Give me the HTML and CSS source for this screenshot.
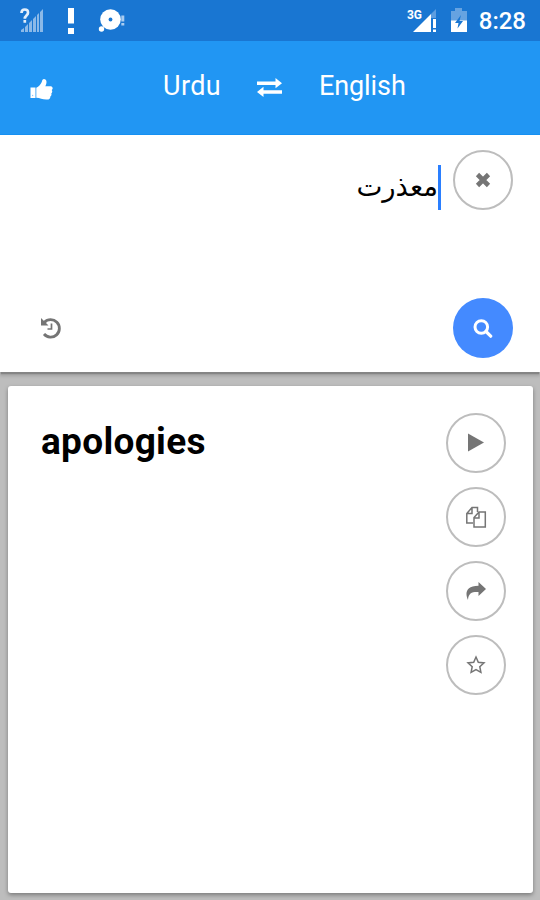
FILE: index.html
```html
<!DOCTYPE html>
<html lang="en">
<head>
    <meta charset="UTF-8">
    <title>Urdu English Translator</title>
    <link rel="stylesheet" href="styles.css">
</head>
<body>
    <div class="status">
        <svg class="st-signal" width="24" height="26" viewBox="0 0 24 26">
            <path d="M1.500 5q0-3.500 3.300-3.500T8 4.700c0 2.800-3.200 2.800-3.200 6M4.800 12v2.800" fill="none" stroke="#e3effb" stroke-width="2.700"/>
            <path d="M1 24v-2l3-2v4zM5 24v-5l3-3v8zM9 24v-9l3-3v12zM13 24V11l3-3v16zM17 24V7l2-2v19zM20 24V4l3-3v23z" fill="#8bb9e8"/>
        </svg>
        <svg class="st-alert" width="8" height="28" viewBox="0 0 8 28">
            <path d="M1 1h6v15.500H1zM1 21h6v6H1z" fill="#fff"/>
        </svg>
        <svg class="st-disc" width="28" height="25" viewBox="0 0 28 25">
            <circle cx="12.500" cy="11.500" r="10.300" fill="#fff"/>
            <circle cx="12.500" cy="11.500" r="1.900" fill="#1976d2"/>
            <circle cx="3.500" cy="21" r="2.700" fill="#fff"/>
            <path d="M23.300 7.500h3v6h-3zM23.300 15h3v2.500h-3z" fill="#a9ccf0"/>
        </svg>
        <div class="st-right">
            <svg class="st-3g" width="31" height="26" viewBox="0 0 31 26">
                <path d="M24 6l5-5v9h-5z" fill="#5e9ee0"/>
                <path d="M6 24L24 6v18zM26 11h3v9h-3zM26 21.500h3V24h-3z" fill="#fff"/>
                <text x="0" y="11" textLength="15" lengthAdjust="spacingAndGlyphs">3G</text>
            </svg>
            <svg class="st-battery" width="18" height="26" viewBox="0 0 18 26">
                <path d="M1 3h4V0h7v3h5v11H1z" fill="#66a3e1"/>
                <path d="M1 12.500h16V24H1z" fill="#fff"/>
                <path d="M11 7L5 15h3.500L7.500 20.500 13 13H9.500z" fill="#1976d2"/>
            </svg>
            <span class="clock">8:28</span>
        </div>
    </div>

    <div class="header">
        <svg class="thumb" width="24" height="24" viewBox="0 0 24 24">
            <path d="M.5 9.500h5V20h-5zM6.300 9.800c2.500-1 4.200-3.300 5.200-5.200.8-1.600.4-3.500 2.400-3.600 3.200.1 3.200 4 1.400 7.300h4.900c2.800 0 3.100 2.800 1.500 3.800 1 1.100.6 2.700-.4 3.300.5 1.300 0 2.500-1 3 .2 2-1 3.100-3.400 3.100-4.300.2-6.800-1.700-10.600-1.800z" fill="#fff"/>
            <circle cx="2.600" cy="17.500" r=".7" fill="#90caf9"/>
        </svg>
        <span class="lang from">Urdu</span>
        <svg class="swap" width="25" height="19" viewBox="0 0 25 19">
            <path d="M0 3.500h18.500V0L25 5.300l-6.500 5V7H0zM25 15.800H6.500V19L0 14l6.500-5.300v3.600H25z" fill="#fff"/>
        </svg>
        <span class="lang to">English</span>
    </div>

    <div class="source">
        <div class="source-top">
            <div class="source-text"><span class="word" lang="ur" dir="rtl">معذرت</span><i class="caret"></i></div>
            <button class="round">
                <svg width="16" height="16" viewBox="0 0 16 16"><path d="M2.500 2.500l11 11M13.500 2.500l-11 11" stroke="#757575" stroke-width="4.600"/></svg>
            </button>
        </div>
        <div class="source-bottom">
            <svg width="22" height="22" viewBox="0 0 22 22">
                <path d="M4.300 5.500A8.700 8.700 0 1 1 4 17" fill="none" stroke="#757575" stroke-width="2.800"/>
                <path d="M1 1v7.500h7.500z" fill="#757575"/>
                <path d="M11.500 6.500V12H7.500" fill="none" stroke="#757575" stroke-width="1.700"/>
            </svg>
            <button class="round search">
                <svg width="20" height="20" viewBox="0 0 20 20"><circle cx="8.300" cy="9" r="6.300" fill="none" stroke="#fff" stroke-width="3"/><path d="M13 13.500l4.700 4.700" stroke="#fff" stroke-width="3.200" stroke-linecap="round"/></svg>
            </button>
        </div>
    </div>

    <div class="result">
        <div class="card">
            <h1>apologies</h1>
            <div class="actions">
                <button class="round">
                    <svg width="20" height="20" viewBox="0 0 20 20"><path d="M2 .5l16 9-16 9z" fill="#757575"/></svg>
                </button>
                <button class="round">
                    <svg width="22" height="22" viewBox="0 0 22 22" fill="none" stroke="#757575" stroke-width="1.500">
                        <path d="M8 17H1.800V7.500L7 1.500h5.500V6M7 1.500v6H2"/>
                        <path d="M9 21v-9.500L14 6h6.300v15zM14 6v6H9"/>
                    </svg>
                </button>
                <button class="round">
                    <svg width="22" height="20" viewBox="0 0 22 20"><path d="M21 8l-7.500 7v-3.900C7 10.800 3.500 12 3 19 .3 13.500-.2 5 13.500 4.800V1z" fill="#757575"/></svg>
                </button>
                <button class="round">
                    <svg width="20" height="20" viewBox="0 0 20 20"><path d="M10 2l2.300 5.200 5.700.7-4.200 3.800 1.100 5.700-4.900-2.800-4.900 2.800 1.100-5.700L2 7.900l5.700-.7z" fill="none" stroke="#757575" stroke-width="1.500"/></svg>
                </button>
            </div>
        </div>
    </div>
</body>
</html>
```
FILE: styles.css
```css
*{
    box-sizing: border-box;
}
body{
    margin: 0;
    height: 900px;
    display: flex;
    flex-direction: column;
    overflow: hidden;
    background-color: #bdbdbd;
    font-family: Roboto, "Noto Sans", sans-serif;
}
svg{
    display: block;
    flex: none;
}
/* status bar */
.status{
    height: 41px;
    padding: 0 14px 0 20px;
    display: flex;
    align-items: center;
    background-color: #1976d2;
}
.st-alert{
    margin-left: 23px;
}
.st-disc{
    margin-left: 23px;
}
.st-right{
    margin-left: auto;
    display: flex;
    align-items: center;
}
.st-3g text{
    font-size: 12.5px;
    font-weight: bold;
    fill: white;
}
.st-battery{
    margin: 0 11px 0 12px;
}
.clock{
    color: white;
    font-size: 24px;
    font-weight: 500;
    line-height: 41px;
    padding-top: 2px;
}
/* language bar */
.header{
    height: 94px;
    padding-left: 30px;
    display: flex;
    align-items: center;
    background-color: #2196f3;
    border-bottom: 1px solid #1590f2;
}
.thumb{
    margin-top: 5px;
}
.lang{
    color: white;
    font-size: 27px;
    line-height: 32px;
    margin-bottom: 3px;
}
.from{
    width: 94px;
    margin-left: 109px;
    letter-spacing: .4px;
}
.to{
    margin-left: 37px;
    letter-spacing: -.1px;
}
/* input */
.source{
    height: 237px;
    padding: 15px 27px 14px 40px;
    display: flex;
    flex-direction: column;
    justify-content: space-between;
    background-color: white;
    box-shadow: 0 3px 1px -1px #858585, 0 4px 3px rgba(0, 0, 0, .15);
}
.source-top{
    display: flex;
    justify-content: flex-end;
    gap: 12px;
}
.source-text{
    display: flex;
    height: 45px;
    margin-top: 15px;
}
.word{
    font-family: "Noto Sans", "DejaVu Sans", sans-serif;
    font-size: 27.5px;
    line-height: 41px;
}
.caret{
    width: 3px;
    height: 45px;
    background-color: #2a7fff;
}
.source-bottom{
    display: flex;
    align-items: center;
    justify-content: space-between;
}
.round{
    width: 60px;
    height: 60px;
    padding: 0;
    display: flex;
    align-items: center;
    justify-content: center;
    border: 2px solid #bdbdbd;
    border-radius: 50%;
    background-color: white;
}
.search{
    border: none;
    background-color: #448aff;
}
/* translation */
.result{
    flex: 1;
    padding: 14px 7px 7px 8px;
}
.card{
    height: 507px;
    padding: 27px 27px 0 33px;
    display: flex;
    justify-content: space-between;
    background-color: white;
    border-radius: 3px;
    box-shadow: 0 2px 4px rgba(0, 0, 0, .35);
}
h1{
    margin: 7px 0 0;
    font-size: 37px;
    line-height: 44px;
    letter-spacing: .3px;
    color: black;
}
.actions{
    display: flex;
    flex-direction: column;
    gap: 14px;
}
```
